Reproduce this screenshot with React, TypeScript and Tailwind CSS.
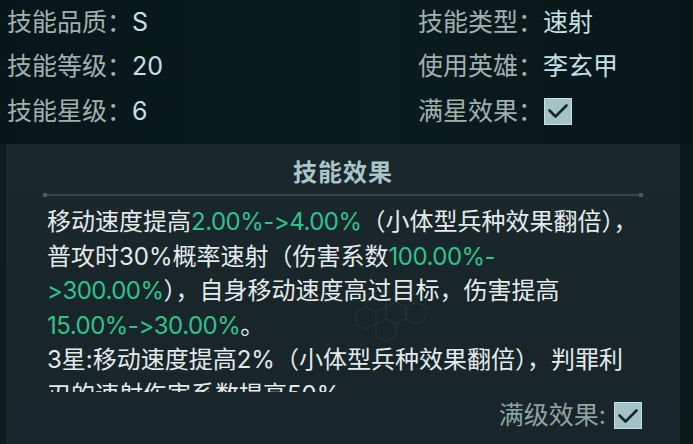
import React from "react";

const FONT = { fontFamily: 'Inter, "Noto Sans CJK SC", "Noto Sans", sans-serif' };

function Check({ className = "" }: { className?: string }) {
  return (
    <div className={`w-[28px] h-[27px] bg-[#a4c3c9] border border-[#c6dfe3] flex items-center justify-center ${className}`}>
      <svg width="24" height="22" viewBox="0 0 24 22">
        <path d="M3.5 10.5 L9.5 16.5 L20.5 5.5" fill="none" stroke="#15262a" strokeWidth="2.6" strokeLinecap="round" strokeLinejoin="round" />
      </svg>
    </div>
  );
}

function Row({ label, value }: { label: string; value: React.ReactNode }) {
  return (
    <div className="flex items-center h-[44.5px] whitespace-nowrap">
      <span className="text-[#a0b1ae]">{label}</span>
      {value}
    </div>
  );
}

const G = ({ children }: { children: React.ReactNode }) => (
  <span className="text-[#2fc291] tracking-[-0.5px]">{children}</span>
);

export default function App() {
  return (
    <div
      style={FONT}
      className="w-[693px] h-[444px] overflow-hidden bg-[linear-gradient(90deg,#071719_0%,#0b1c1e_55%,#081618_100%)] flex flex-col [font-feature-settings:'calt'_0,'liga'_0] [font-variant-ligatures:none]"
    >
      <div className="grid grid-cols-[411px_1fr] pl-[7px] text-[25px] leading-none">
        <div className="flex flex-col">
          <Row label="技能品质：" value={<span className="text-[#c4e0e6]">S</span>} />
          <Row label="技能等级：" value={<span className="text-[#c4e0e6]">20</span>} />
          <Row label="技能星级：" value={<span className="text-[#c4e0e6]">6</span>} />
        </div>
        <div className="flex flex-col">
          <Row label="技能类型：" value={<span className="text-[#c4e0e6]">速射</span>} />
          <Row label="使用英雄：" value={<span className="text-[#c4e0e6]">李玄甲</span>} />
          <Row label="满星效果：" value={<Check className="ml-[1px]" />} />
        </div>
      </div>

      <div className="flex flex-1 mt-[10.5px]">
        <div className="w-[6px] bg-[#0c1b1d]" />
        <div className="relative w-[674px] bg-[linear-gradient(180deg,#1a272b_0%,#182529_60%,#18252a_100%)] flex flex-col">
          <div className="h-[49px] flex items-end justify-center pb-[8px]">
            <span className="text-[24px] leading-none font-bold text-[#a9c5ca] tracking-[1px]">技能效果</span>
          </div>
          <div className="flex items-center px-[37px] h-[4px]">
            <div className="w-[4px] h-[4px] bg-[#4a585c]" />
            <div className="flex-1 h-[2px] bg-[#394649]" />
            <div className="w-[4px] h-[4px] bg-[#4a585c]" />
          </div>
          <div className="relative mt-[8px] h-[187px] overflow-hidden pl-[41px] text-[24px] leading-[34.5px] text-[#e4ebeb] whitespace-nowrap">
            <svg className="absolute left-[340px] top-[85px] opacity-60" width="100" height="60" viewBox="0 0 100 60">
              <g fill="none" stroke="#31414a" strokeWidth="1">
                <path d="M20 5 L30 0 L40 5 L40 17 L30 22 L20 17 Z" />
                <path d="M40 17 L50 12 L60 17 L60 29 L50 34 L40 29 Z" />
                <path d="M20 17 L30 22 L30 34 L20 39 L10 34 L10 22 Z" />
                <path d="M30 34 L40 29 L50 34 L50 46 L40 51 L30 46 Z" />
                <path d="M60 17 L70 12 L80 17 L80 29 L70 34 L60 29 Z" />
              </g>
            </svg>
            <div className="relative">移动速度提高<G>2.00%-&gt;4.00%</G>（小体型兵种效果翻倍），</div>
            <div className="relative">普攻时30%概率速射（伤害系数<G>100.00%-</G></div>
            <div className="relative"><G>&gt;300.00%</G>），自身移动速度高过目标，伤害提高</div>
            <div className="relative"><G>15.00%-&gt;30.00%</G>。</div>
            <div className="relative">3星:移动速度提高2%（小体型兵种效果翻倍），判罪利</div>
            <div className="relative">刃的速射伤害系数提高50%</div>
          </div>
          <div className="flex items-center justify-end pr-[38px] mt-[10px]">
            <span className="text-[25px] leading-none text-[#8fa4a1]">满级效果:</span>
            <Check className="ml-[8px]" />
          </div>
        </div>
        <div className="flex-1 bg-[#0a191b]" />
      </div>
    </div>
  );
}
